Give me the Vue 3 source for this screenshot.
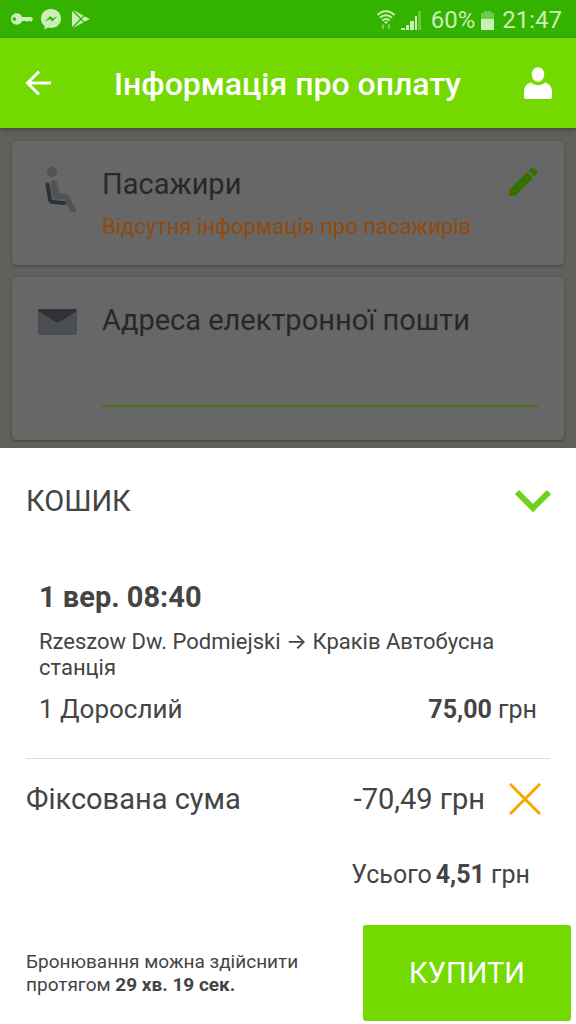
<script setup>
import { ref } from 'vue'

const email = ref('')
const discount = ref('-70,49 грн')
</script>

<template>
  <div class="app">
    <div class="status">
      <svg class="key" viewBox="0 0 23 12" aria-hidden="true">
        <path fill-rule="evenodd" d="M6 0a6 6 0 0 1 5.600 4H21l2 1.500-1 3h-2l-1-1-1 1h-2l-1-.500h-3.400A6 6 0 1 1 6 0zM3.500 4.200a1.800 1.800 0 1 0 0 3.600 1.800 1.800 0 0 0 0-3.600z" />
      </svg>
      <svg class="messenger" viewBox="0 0 20 21" aria-hidden="true">
        <path fill-rule="evenodd" d="M10 0c5.700 0 10 4.100 10 9.500S15.700 19 10 19c-1 0-2-.100-3-.400L3.500 20.500v-3.600A9.200 9.200 0 0 1 0 9.500C0 4.100 4.300 0 10 0zM4 12.500l4.900-2.500 2.500 2.600L16.500 7l-5 2.500L9.200 7z" />
      </svg>
      <svg class="play" viewBox="0 0 18 18" aria-hidden="true">
        <path d="M0 1v16l8-8zM1 0l8 8 2.400-2.400zM1 18l8-8 2.400 2.400zM12.400 6.200L9.800 9l2.600 2.800L18 9z" />
      </svg>
      <div class="status-right">
        <svg class="wifi" viewBox="0 0 18 20" aria-hidden="true">
          <g fill="none" stroke="currentColor" stroke-width="2">
            <path d="M.600 5c4.800-5 12-5 16.800 0M3 7.800c3.400-3.500 8.600-3.500 12 0M5.400 10.600c2-2.200 5.200-2.200 7.200 0" />
          </g>
          <path d="M7 12q2-1.500 4 0l-2 2z" />
          <path opacity=".5" d="M6 14l2 2H7v3H5v-3H4zM12 19l2-2h-1v-3h-2v3h-1z" />
        </svg>
        <svg class="signal" viewBox="0 0 20 19" aria-hidden="true">
          <path d="M0 17h4v2H0zM5 14h3v5H5zM9 10h4v9H9zM14 5h2v14h-2z" />
          <path opacity=".35" d="M17 0h3v19h-3z" />
        </svg>
        <span>60%</span>
        <svg class="battery" viewBox="0 0 13 19" aria-hidden="true">
          <path opacity=".4" d="M3 0h7v2h3v6H0V2h3z" />
          <path d="M0 8h13v11H0z" />
        </svg>
        <span>21:47</span>
      </div>
    </div>

    <header class="bar">
      <button class="icon-button" type="button" aria-label="Назад">
        <svg class="back" viewBox="0 0 26 26" fill="none" stroke="currentColor" stroke-width="3">
          <path d="M26 13H2.500M14 1.500L2.500 13 14 24.500" />
        </svg>
      </button>
      <h1>Інформація про оплату</h1>
      <button class="icon-button" type="button" aria-label="Профіль">
        <svg class="person" viewBox="0 0 28 32" fill="currentColor">
          <ellipse cx="14" cy="7.500" rx="6.300" ry="7.300" />
          <path d="M7 15.500c4 3.600 10 3.600 14 0 4.500 1.300 7 4.500 7 9V30q0 2-2 2H2q-2 0-2-2v-5.500c0-4.500 2.500-7.700 7-9z" />
        </svg>
      </button>
    </header>

    <main class="content">
      <section class="card">
        <div class="card-icon">
          <svg class="seat" viewBox="0 0 31 45" aria-hidden="true">
            <circle cx="7" cy="5" r="5" fill="#505456" />
            <path d="M8.500 16L10.500 29.500H20.500L28 42.500" fill="none" stroke="#505456" stroke-width="6" stroke-linecap="round" stroke-linejoin="round" />
            <path d="M8 15h4l3 14H9z" fill="#505456" />
            <path d="M2.500 17.500L5 32.500Q5.500 35 8 35L19 36" fill="none" stroke="#2d3135" stroke-width="4" stroke-linecap="round" />
          </svg>
        </div>
        <div class="card-body">
          <h2>Пасажири</h2>
          <p class="warning">Відсутня інформація про пасажирів</p>
        </div>
        <button class="edit" type="button" aria-label="Редагувати">
          <svg class="pencil" viewBox="0 0 29 29" fill="currentColor">
            <path d="M0 23L18 5l6 6L6 29H1q-1 0-1-1zM19.500 3.500l2.700-2.700q1.300-1.300 2.600 0l3.400 3.400q1.300 1.300 0 2.600L25.500 9.500z" />
          </svg>
        </button>
      </section>

      <section class="card email-card">
        <div class="card-icon">
          <svg class="mail" viewBox="0 0 39 26" aria-hidden="true">
            <rect width="39" height="26" rx="2" fill="#4b4e52" />
            <path d="M1 0h37q1 0 1 2L20.500 13.500q-1 .600-2 0L0 2Q0 0 1 0z" fill="#303236" />
          </svg>
        </div>
        <div class="card-body">
          <h2><label for="email">Адреса електронної пошти</label></h2>
          <input id="email" v-model="email" type="email">
        </div>
      </section>
    </main>

    <section class="sheet">
      <div class="sheet-head">
        <h2>КОШИК</h2>
        <button class="plain" type="button" aria-label="Згорнути кошик">
          <svg class="chevron" viewBox="0 0 36 24" fill="none" stroke="#70d11c" stroke-width="6">
            <path d="M2 3l16 16L34 3" />
          </svg>
        </button>
      </div>

      <div class="trip">
        <h3>1 вер. 08:40</h3>
        <p class="route">Rzeszow Dw. Podmiejski → Краків Автобусна станція</p>
        <div class="fare">
          <span>1 Дорослий</span>
          <span class="price"><b>75,00</b> грн</span>
        </div>
      </div>

      <div class="discount">
        <span>Фіксована сума</span>
        <span class="amount">{{ discount }}</span>
        <button class="plain" type="button" aria-label="Видалити знижку">
          <svg class="cross" viewBox="0 0 32 32" fill="none" stroke="#f5a800" stroke-width="3">
            <path d="M1 1l30 30M31 1L1 31" />
          </svg>
        </button>
      </div>

      <div class="total">
        <span>Усього</span>
        <span><b>4,51</b> грн</span>
      </div>

      <div class="footer">
        <p>Бронювання можна здійснити протягом <b>29 хв. 19 сек.</b></p>
        <button class="buy" type="button">КУПИТИ</button>
      </div>
    </section>
  </div>
</template>

<style>
body {
  margin: 0;
}
</style>

<style scoped>
.app {
  display: flex;
  flex-direction: column;
  min-height: 100vh;
  background: #fff;
  color: #444;
  font-family: Roboto, Inter, "Noto Sans", sans-serif;
}

h1,
h2,
h3,
p {
  margin: 0;
  font-weight: 400;
}

svg {
  display: block;
  flex: none;
}

button {
  margin: 0;
  padding: 0;
  border: 0;
  background: none;
  color: inherit;
  font: inherit;
}

b {
  font-weight: 700;
}

.status {
  display: flex;
  align-items: center;
  gap: 8px;
  height: 38px;
  padding: 0 14px 0 11px;
  background: #33b200;
  color: #c9f0b8;
  font-size: 24px;
}

.status svg {
  fill: currentColor;
}

.key {
  width: 22px;
  height: 12px;
}

.messenger {
  width: 20px;
  height: 21px;
}

.play {
  width: 18px;
  height: 18px;
  margin-left: 3px;
}

.status-right {
  display: flex;
  align-items: center;
  gap: 6px;
  margin-left: auto;
  padding-top: 2px;
}

.wifi {
  width: 18px;
  height: 20px;
}

.signal {
  width: 20px;
  height: 19px;
  margin-right: 4px;
}

.battery {
  width: 13px;
  height: 19px;
  margin-right: 2px;
}

.bar {
  position: relative;
  z-index: 1;
  display: flex;
  align-items: center;
  justify-content: space-between;
  height: 90px;
  padding: 0 24px 0 25px;
  background: #73d900;
  box-shadow: 0 2px 5px rgba(0, 0, 0, 0.3);
  color: #fff;
}

h1 {
  padding-top: 2px;
  font-size: 32px;
  font-weight: 500;
}

.back {
  width: 26px;
  height: 26px;
}

.person {
  width: 28px;
  height: 32px;
}

.content {
  display: flex;
  flex-direction: column;
  gap: 12px;
  padding: 13px 12px 8px;
  background: #61615c;
}

.card {
  display: flex;
  min-height: 124px;
  box-sizing: border-box;
  padding: 24px 26px 16px;
  border-radius: 4px;
  background: #676767;
  box-shadow: 0 1px 3px rgba(0, 0, 0, 0.35);
  color: #282828;
}

.email-card {
  min-height: 163px;
}

.card-icon {
  display: flex;
  flex: none;
  width: 64px;
}

.seat {
  width: 31px;
  height: 45px;
  margin: 2px 0 0 7px;
}

.mail {
  width: 39px;
  height: 26px;
  margin-top: 8px;
}

.card-body {
  flex: 1;
}

.card h2 {
  font-size: 29px;
  line-height: 38px;
}

.warning {
  margin-top: 10px;
  color: #914a0c;
  font-size: 22px;
  line-height: 28px;
}

.edit {
  align-self: flex-start;
  margin-top: 2px;
  color: #357000;
}

.pencil {
  width: 29px;
  height: 29px;
}

input {
  display: block;
  width: 100%;
  height: 48px;
  margin-top: 20px;
  box-sizing: border-box;
  padding: 0;
  border: 0;
  border-bottom: 2px solid #44721a;
  outline: 0;
  background: transparent;
  color: inherit;
  font: inherit;
  font-size: 24px;
}

.sheet {
  display: flex;
  flex: 1;
  flex-direction: column;
  background: #fff;
}

.sheet-head {
  display: flex;
  align-items: center;
  justify-content: space-between;
  padding: 33px 25px 0 26px;
}

.sheet-head h2 {
  font-size: 29px;
  line-height: 40px;
}

.chevron {
  width: 36px;
  height: 24px;
}

.trip {
  margin: 0 26px;
  padding: 56px 13px 32px;
  border-bottom: 1px solid #ddd;
}

h3 {
  font-size: 29px;
  font-weight: 700;
  line-height: 40px;
}

.route {
  margin-top: 12px;
  font-size: 22px;
  line-height: 26px;
}

.fare {
  display: flex;
  align-items: baseline;
  justify-content: space-between;
  margin-top: 12px;
  font-size: 26px;
  line-height: 32px;
}

.price {
  font-size: 25px;
}

.discount {
  display: flex;
  align-items: center;
  padding: 20px 35px 0 26px;
  font-size: 29px;
  line-height: 40px;
}

.amount {
  margin: 0 24px 0 auto;
}

.cross {
  width: 32px;
  height: 32px;
}

.total {
  display: flex;
  justify-content: flex-end;
  gap: 4px;
  padding: 40px 46px 0 26px;
  font-size: 25px;
  line-height: 32px;
}

.footer {
  display: flex;
  align-items: center;
  justify-content: space-between;
  gap: 24px;
  margin-top: auto;
  padding: 0 5px 3px 26px;
}

.footer p {
  flex: 1;
  font-size: 19px;
  line-height: 23px;
}

.buy {
  width: 208px;
  height: 96px;
  border-radius: 3px;
  background: #73d900;
  color: #fff;
  font-size: 29px;
}
</style>
